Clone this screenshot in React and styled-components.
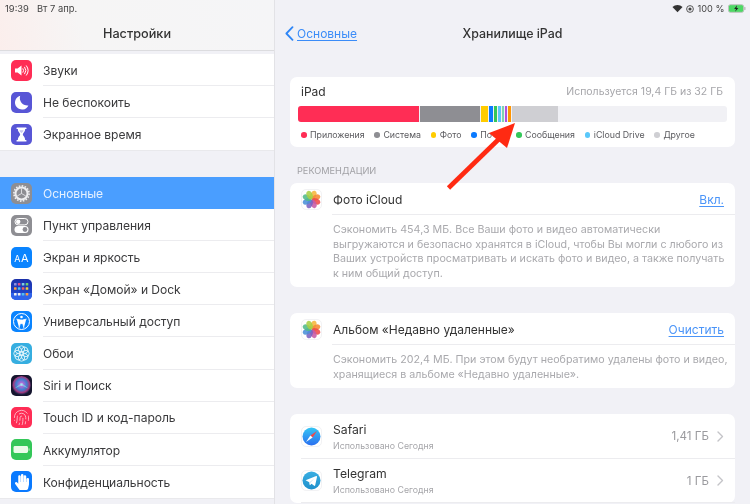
import React from "react";
import styled, { createGlobalStyle } from "styled-components";
import { FaHandPaper } from "react-icons/fa";
import { Fingerprint } from "lucide-react";

const Global = createGlobalStyle`
  html, body { margin: 0; padding: 0; background: #f1f1f6; }
  * { box-sizing: border-box; }
`;

const Root = styled.div`
  position: relative;
  width: 750px;
  height: 504px;
  overflow: hidden;
  display: flex;
  background: #f1f1f6;
  font-family: Inter, "Liberation Sans", sans-serif;
  color: #333;
  filter: blur(0.4px);
`;

const Sidebar = styled.aside`
  width: 275px;
  flex: none;
  border-right: 1px solid #e2e2e6;
  background: #f1f1f6;
`;

const SideHeader = styled.header`
  height: 51px;
  background: linear-gradient(75deg, #fbeeec 0%, #f6f5f5 30%, #f5f5f7 100%);
  border-bottom: 1px solid #dcdcdf;
`;

const StatusLeft = styled.div`
  height: 16px;
  padding: 2px 0 0 5px;
  display: flex;
  gap: 8px;
  font-size: 9.4px;
  line-height: 14px;
  color: #444;
`;

const SideTitle = styled.div`
  margin-top: 3px;
  text-align: center;
  font-size: 12.7px;
  line-height: 29px;
  font-weight: 500;
  color: #333;
`;

const Group = styled.div`
  margin-top: ${(p) => p.$mt}px;
  background: #fff;
  border-bottom: 1px solid #e9e9ec;
`;

const Row = styled.div`
  height: ${(p) => p.$h}px;
  display: flex;
  align-items: center;
  padding-left: 11px;
  background: ${(p) => (p.$active ? "#4a9eff" : "transparent")};
  color: ${(p) => (p.$active ? "#e6f1ff" : "#3a3a3c")};
`;

const IconBox = styled.span`
  width: 21px;
  height: 21px;
  flex: none;
  border-radius: 5px;
  background: ${(p) => p.$bg};
  display: flex;
  align-items: center;
  justify-content: center;
  overflow: hidden;
  color: #fff;
`;

const RowLabel = styled.span`
  align-self: stretch;
  flex: 1;
  margin-left: 11px;
  padding-top: 1.5px;
  display: flex;
  align-items: center;
  font-size: 12.1px;
  letter-spacing: -0.05px;
  border-bottom: ${(p) => (p.$sep ? "1px solid #ececef" : "none")};
`;

const AaText = styled.span`
  font-size: 11px;
  font-weight: 400;
  padding-top: 1px;
  small { font-size: 9px; margin-right: 0.5px; }
`;

const Main = styled.main`
  flex: 1;
  min-width: 0;
  padding: 0 15px;
`;

const StatusRight = styled.div`
  height: 15px;
  margin-right: -11px;
  display: flex;
  justify-content: flex-end;
  align-items: center;
  gap: 3.5px;
  font-size: 9.2px;
  color: #444;
  padding-top: 2px;
`;

const Nav = styled.nav`
  position: relative;
  height: 29px;
  margin: 4px 0 0 -5px;
  display: flex;
  align-items: center;
`;

const BackLink = styled.a`
  display: flex;
  align-items: center;
  gap: 3px;
  font-size: 12px;
  color: #3b8cf8;
  span { text-decoration: underline; text-underline-offset: 2px; text-decoration-thickness: 1px; }
`;

const NavTitle = styled.div`
  position: absolute;
  left: 5px;
  right: 0;
  text-align: center;
  font-size: 12.4px;
  font-weight: 500;
  color: #333;
`;

const Card = styled.section`
  margin-top: ${(p) => p.$mt}px;
  height: ${(p) => (p.$h ? `${p.$h}px` : "auto")};
  background: #fff;
  border-radius: 7px;
  width: 445px;
`;

const StorageCard = styled(Card)`
  padding: 6px 8px 0;
`;

const StorageHead = styled.div`
  height: 17px;
  display: flex;
  justify-content: space-between;
  align-items: center;
  padding: 0 4px 0 3px;
  font-size: 12px;
`;

const Used = styled.span`
  font-size: 10.5px;
  color: #a6a6aa;
`;

const Bar = styled.div`
  margin-top: 6px;
  height: 16px;
  width: 429px;
  display: flex;
  gap: 1px;
  background: #f1f1f5;
  border-radius: 3px;
  overflow: hidden;
`;

const Seg = styled.span`
  width: ${(p) => p.$w}px;
  flex: none;
  background: ${(p) => p.$c};
`;

const Legend = styled.div`
  margin-top: 7px;
  padding-left: 3px;
  display: flex;
  align-items: center;
  gap: 9.8px;
  font-size: 8.8px;
  line-height: 12px;
  color: #5a5a5e;
`;

const LegendItem = styled.span`
  display: flex;
  align-items: center;
  gap: 3.5px;
  white-space: nowrap;
  &::before {
    content: "";
    width: 5.5px;
    height: 5.5px;
    border-radius: 50%;
    background: ${(p) => p.$c};
  }
`;

const SectionLabel = styled.div`
  height: 36px;
  padding: 18px 0 0 7px;
  font-size: 9.2px;
  line-height: 12px;
  color: #a2a2a6;
`;

const RecHead = styled.div`
  height: 32px;
  display: flex;
  align-items: center;
  padding-left: 11px;
`;

const AppIcon = styled.span`
  width: 21px;
  height: 21px;
  flex: none;
  border-radius: 5px;
  border: 1px solid #f2f2f4;
  background: #fff;
  display: flex;
  align-items: center;
  justify-content: center;
  overflow: hidden;
`;

const RecTitleRow = styled.div`
  flex: 1;
  align-self: stretch;
  margin-left: 10px;
  padding: 1px 11px 0 1px;
  display: flex;
  align-items: center;
  justify-content: space-between;
  border-bottom: 1px solid #ececef;
  font-size: 12px;
`;

const ActionLink = styled.a`
  color: #4a94f8;
  text-decoration: underline;
  text-underline-offset: 2px;
  text-decoration-thickness: 1px;
`;

const RecBody = styled.p`
  margin: 0;
  padding: 8px 0 0 43px;
  font-size: 10.7px;
  line-height: 14.7px;
  color: #a9a9ad;
  white-space: nowrap;
`;

const AppRow = styled.div`
  height: ${(p) => p.$h}px;
  padding-left: 11px;
  display: flex;
  align-items: center;
`;

const AppMain = styled.div`
  flex: 1;
  align-self: stretch;
  display: flex;
  align-items: center;
  justify-content: space-between;
  padding: 0 11px 0 11px;
`;

const AppName = styled.div`
  font-size: 12.2px;
  line-height: 15px;
  color: #333;
`;

const AppSub = styled.div`
  margin-top: 3px;
  font-size: 8.8px;
  line-height: 11px;
  color: #a6a6aa;
`;

const AppSize = styled.span`
  display: flex;
  align-items: center;
  gap: 8px;
  font-size: 11.6px;
  color: #9a9a9e;
`;

const RowSep = styled.div`
  height: 1px;
  margin-left: 11px;
  background: #ececef;
`;

const Arrow = styled.svg`
  position: absolute;
  left: 0;
  top: 0;
  pointer-events: none;
`;

const Svg = ({ children, s = 21, v = 21 }) => (
  <svg width={s} height={s} viewBox={`0 0 ${v} ${v}`}>{children}</svg>
);

const Sound = () => (
  <Svg>
    <path d="M4 8.5h2.6L10.5 5.5v10L6.6 12.5H4z" fill="#fff" />
    <g fill="none" stroke="#fff" strokeWidth="1" strokeLinecap="round">
      <path d="M12 8.7a3 3 0 0 1 0 3.6" />
      <path d="M13.7 7.2a5.4 5.4 0 0 1 0 6.6" />
      <path d="M15.4 5.8a7.6 7.6 0 0 1 0 9.4" />
    </g>
  </Svg>
);
const Moon = () => (
  <Svg><path d="M9.2 3.8a7 7 0 1 0 8.2 9.6A7.4 7.4 0 0 1 9.2 3.8z" fill="#fff" /></Svg>
);
const Hourglass = () => (
  <Svg>
    <rect x="5.5" y="3.5" width="10" height="1.6" rx=".6" fill="#fff" />
    <rect x="5.5" y="15.9" width="10" height="1.6" rx=".6" fill="#fff" />
    <path d="M6.8 5.1h7.4c0 3-2.4 4-2.4 5.4s2.4 2.4 2.4 5.4H6.8c0-3 2.4-4 2.4-5.4S6.8 8.1 6.8 5.1z" fill="#fff" />
    <path d="M8.4 6.2h4.2c-.3 1.4-1.6 2-2.1 3-.5-1-1.8-1.6-2.1-3z" fill="#c9c8f0" />
  </Svg>
);
const Gear = () => (
  <Svg>
    <circle cx="10.5" cy="10.5" r="6" fill="none" stroke="#eeeef0" strokeWidth="2" />
    <circle cx="10.5" cy="10.5" r="7.6" fill="none" stroke="#eeeef0" strokeWidth="1.6" strokeDasharray="1.6 1.38" />
    <g stroke="#eeeef0" strokeWidth=".8">
      <path d="M10.5 10.5V5.5M10.5 10.5L6.2 13M10.5 10.5L14.8 13" />
    </g>
  </Svg>
);
const Toggles = () => (
  <Svg>
    <rect x="4" y="3.5" width="13" height="6.4" rx="3.2" fill="none" stroke="#fff" strokeWidth="1" />
    <circle cx="7.2" cy="6.7" r="2.2" fill="#fff" />
    <rect x="3.5" y="11" width="14" height="7" rx="3.5" fill="#fff" />
    <circle cx="14" cy="14.5" r="2.4" fill="#8e8e93" />
  </Svg>
);
const Home = () => {
  const dots = [
    ["#8f8fe0", "#e0508f", "#7fd0e0", "#70d070"],
    ["#ff9f40", "#50c0f0", "#f06060", "#f0d040"],
    ["#f0f0f0", "#f0f0f0", "#50c0f0", "#ff9f40"],
  ];
  return (
    <Svg>
      <rect x="0" y="14" width="21" height="7" fill="#2f63ea" />
      {dots.map((r, i) =>
        r.map((c, j) => (
          <rect key={`${i}${j}`} x={3 + j * 3.9} y={4 + i * (i === 2 ? 5 : 4.2)} width="2.6" height="2.6" rx=".6" fill={c} />
        ))
      )}
    </Svg>
  );
};
const Access = () => (
  <Svg>
    <circle cx="10.5" cy="10.5" r="8" fill="none" stroke="#fff" strokeWidth="1" />
    <circle cx="10.5" cy="6" r="1.3" fill="#fff" />
    <path d="M5.8 8.2l3.6.7v3.1l-1.3 4.8M15.2 8.2l-3.6.7v3.1l1.3 4.8M9.6 9h1.8v3.6H9.6z" fill="#fff" stroke="#fff" strokeWidth=".8" strokeLinecap="round" strokeLinejoin="round" />
  </Svg>
);
const Wallpaper = () => (
  <Svg>
    <g fill="none" stroke="#e4f5fb" strokeWidth=".9">
      {[0, 45, 90, 135, 180, 225, 270, 315].map((a) => (
        <circle key={a} cx="10.5" cy="6" r="3.2" transform={`rotate(${a} 10.5 10.5)`} />
      ))}
      <circle cx="10.5" cy="10.5" r="2" />
    </g>
  </Svg>
);
const Siri = () => (
  <Svg>
    <defs>
      <radialGradient id="siriG" cx="50%" cy="45%" r="52%">
        <stop offset="0%" stopColor="#ffffff" />
        <stop offset="20%" stopColor="#b06ad8" />
        <stop offset="55%" stopColor="#3f7fd0" />
        <stop offset="82%" stopColor="#a03a80" />
        <stop offset="100%" stopColor="#23234a" />
      </radialGradient>
    </defs>
    <circle cx="10.5" cy="10.5" r="9.4" fill="url(#siriG)" />
    <path d="M3.5 13.5 L10.5 8 L17.5 13.5 L10.5 10.5Z" fill="#7de0e8" opacity=".7" />
  </Svg>
);
const Battery = () => (
  <Svg>
    <rect x="2.5" y="7" width="14.5" height="7" rx="1.4" fill="#eafbe9" />
    <rect x="17.4" y="9.2" width="1.3" height="2.6" rx=".5" fill="#a5e8b0" />
  </Svg>
);

const Flower = ({ s = 19 }) => {
  const cols = ["#f6b73c", "#f58a34", "#ef4a4a", "#c65aa6", "#7a62c0", "#4a8fd8", "#52b98a", "#a8cf45"];
  return (
    <svg width={s} height={s} viewBox="0 0 21 21">
      {cols.map((c, i) => (
        <ellipse key={c} cx="10.5" cy="5.2" rx="3.2" ry="5" fill={c} opacity=".88" transform={`rotate(${i * 45 + 22} 10.5 10.5)`} />
      ))}
    </svg>
  );
};

const SafariIcon = () => (
  <svg width="19" height="19" viewBox="0 0 19 19">
    <defs>
      <linearGradient id="safG" x1="0" y1="0" x2="0" y2="1">
        <stop offset="0%" stopColor="#35c6f4" />
        <stop offset="100%" stopColor="#2a6ff0" />
      </linearGradient>
    </defs>
    <circle cx="9.5" cy="9.5" r="9" fill="url(#safG)" />
    <path d="M15 4L8.4 8.4l2.2 2.2z" fill="#f04a4a" />
    <path d="M4 15l4.4-6.6 2.2 2.2z" fill="#fff" />
  </svg>
);
const TelegramIcon = () => (
  <svg width="19" height="19" viewBox="0 0 19 19">
    <defs>
      <linearGradient id="tgG" x1="0" y1="0" x2="0" y2="1">
        <stop offset="0%" stopColor="#39aee2" />
        <stop offset="100%" stopColor="#1f90cc" />
      </linearGradient>
    </defs>
    <circle cx="9.5" cy="9.5" r="9" fill="url(#tgG)" />
    <path d="M3.6 9.3l10.6-4.2c.5-.2.9.1.8.8l-1.8 8.4c-.1.6-.5.7-1 .5l-2.7-2-1.3 1.3c-.2.2-.4.2-.5 0l-.4-2.9z" fill="#fff" />
    <path d="M7.3 11.2l5.3-4-4.3 4.9-.2 1.6z" fill="#cfe6f3" />
  </svg>
);

const Chevron = () => (
  <svg width="7" height="11" viewBox="0 0 7 11">
    <path d="M1 1l4.5 4.5L1 10" fill="none" stroke="#c4c4c8" strokeWidth="1.4" strokeLinecap="round" strokeLinejoin="round" />
  </svg>
);

const group1 = [
  ["#ff2d55", <Sound />, "Звуки"],
  ["#5856d6", <Moon />, "Не беспокоить"],
  ["#5856d6", <Hourglass />, "Экранное время"],
];
const group2 = [
  ["#8e8e93", <Gear />, "Основные"],
  ["#8e8e93", <Toggles />, "Пункт управления"],
  ["#0a84ff", <AaText><small>A</small>A</AaText>, "Экран и яркость"],
  ["linear-gradient(#1a2fa8,#2450d8)", <Home />, "Экран «Домой» и Dock"],
  ["#0a84ff", <Access />, "Универсальный доступ"],
  ["#36aee0", <Wallpaper />, "Обои"],
  ["#15152e", <Siri />, "Siri и Поиск"],
  ["#ff2d55", <Fingerprint size={17} strokeWidth={1.1} color="#ffd7df" />, "Touch ID и код-пароль"],
  ["#34c759", <Battery />, "Аккумулятор"],
  ["#0a7aff", <FaHandPaper size={16} color="#fff" />, "Конфиденциальность"],
];

const segs = [
  ["#ff2d55", 121],
  ["#8e8e93", 60],
  ["#ffcc00", 7],
  ["#0a7aff", 3.5],
  ["#34c759", 3.5],
  ["#5ac8fa", 3],
  ["#7fd4b0", 1.5],
  ["#af52de", 2.5],
  ["#ff9500", 3],
  ["#cfcfd3", 46],
];

const legend = [
  ["#ff2d55", "Приложения"],
  ["#8e8e93", "Система"],
  ["#ffcc00", "Фото"],
  ["#0a7aff", "Почта"],
  ["#34c759", "Сообщения"],
  ["#5ac8fa", "iCloud Drive"],
  ["#cfcfd3", "Другое"],
];

export default function App() {
  return (
    <Root>
      <Global />
      <Sidebar>
        <SideHeader>
          <StatusLeft>
            <span>19:39</span>
            <span>Вт 7 апр.</span>
          </StatusLeft>
          <SideTitle>Настройки</SideTitle>
        </SideHeader>
        <Group $mt={3}>
          {group1.map(([bg, ic, t], i) => (
            <Row key={t} $h={32}>
              <IconBox $bg={bg}>{ic}</IconBox>
              <RowLabel $sep={i < 2}>{t}</RowLabel>
            </Row>
          ))}
        </Group>
        <Group $mt={26}>
          {group2.map(([bg, ic, t], i) => (
            <Row key={t} $h={32.1} $active={i === 0}>
              <IconBox $bg={bg}>{ic}</IconBox>
              <RowLabel $sep={i > 0 && i < 9}>{t}</RowLabel>
            </Row>
          ))}
        </Group>
      </Sidebar>
      <Main>
        <StatusRight>
          <svg width="11" height="9" viewBox="0 0 13 10">
            <path d="M6.5 9.5L0.5 3.2a8.6 8.6 0 0 1 12 0z" fill="#333" />
          </svg>
          <svg width="8" height="8" viewBox="0 0 9 9">
            <circle cx="4.5" cy="4.5" r="3.8" fill="none" stroke="#444" strokeWidth="1" />
            <circle cx="4.5" cy="4.5" r="1.8" fill="#444" />
          </svg>
          <span>100 %</span>
          <svg width="18" height="9" viewBox="0 0 19 9">
            <rect x=".5" y=".5" width="16" height="8" rx="2" fill="#4cd964" stroke="#c0c0c0" />
            <rect x="17" y="3" width="1.5" height="3" fill="#bbb" />
            <path d="M9.5 1L6.5 5h2L7.5 8l3.5-4H9z" fill="#222" />
          </svg>
        </StatusRight>
        <Nav>
          <BackLink>
            <svg width="9" height="15" viewBox="0 0 9 15">
              <path d="M7.5 1.2L1.4 7.5l6.1 6.3" fill="none" stroke="#2f86f6" strokeWidth="1.8" strokeLinecap="round" strokeLinejoin="round" />
            </svg>
            <span>Основные</span>
          </BackLink>
          <NavTitle>Хранилище iPad</NavTitle>
        </Nav>
        <StorageCard $mt={29} $h={70}>
          <StorageHead>
            <span>iPad</span>
            <Used>Используется 19,4 ГБ из 32 ГБ</Used>
          </StorageHead>
          <Bar>
            {segs.map(([c, w]) => (
              <Seg key={c} $c={c} $w={w} />
            ))}
          </Bar>
          <Legend>
            {legend.map(([c, t]) => (
              <LegendItem key={t} $c={c}>{t}</LegendItem>
            ))}
          </Legend>
        </StorageCard>
        <SectionLabel>РЕКОМЕНДАЦИИ</SectionLabel>
        <Card $mt={0} $h={104}>
          <RecHead>
            <AppIcon><Flower /></AppIcon>
            <RecTitleRow>
              <span>Фото iCloud</span>
              <ActionLink>Вкл.</ActionLink>
            </RecTitleRow>
          </RecHead>
          <RecBody>
            Сэкономить 454,3 МБ. Все Ваши фото и видео автоматически<br />
            выгружаются и безопасно хранятся в iCloud, чтобы Вы могли с любого из<br />
            Ваших устройств просматривать и искать фото и видео, а также получать<br />
            к ним общий доступ.
          </RecBody>
        </Card>
        <Card $mt={26} $h={75}>
          <RecHead>
            <AppIcon><Flower /></AppIcon>
            <RecTitleRow>
              <span>Альбом «Недавно удаленные»</span>
              <ActionLink>Очистить</ActionLink>
            </RecTitleRow>
          </RecHead>
          <RecBody>
            Сэкономить 202,4 МБ. При этом будут необратимо удалены фото и видео,<br />
            хранящиеся в альбоме «Недавно удаленные».
          </RecBody>
        </Card>
        <Card $mt={26}>
          <AppRow $h={44}>
            <AppIcon><SafariIcon /></AppIcon>
            <AppMain>
              <div>
                <AppName>Safari</AppName>
                <AppSub>Использовано Сегодня</AppSub>
              </div>
              <AppSize>1,41 ГБ <Chevron /></AppSize>
            </AppMain>
          </AppRow>
          <RowSep />
          <AppRow $h={43}>
            <AppIcon><TelegramIcon /></AppIcon>
            <AppMain>
              <div>
                <AppName>Telegram</AppName>
                <AppSub>Использовано Сегодня</AppSub>
              </div>
              <AppSize>1 ГБ <Chevron /></AppSize>
            </AppMain>
          </AppRow>
          <RowSep />
        </Card>
      </Main>
      <Arrow width="750" height="504" viewBox="0 0 750 504">
        <path d="M448.5 188L500 138" stroke="#ff2a12" strokeWidth="4.6" fill="none" strokeLinecap="butt" />
        <polygon points="515,123 507,148 489,133" fill="#ff2a12" />
      </Arrow>
    </Root>
  );
}
